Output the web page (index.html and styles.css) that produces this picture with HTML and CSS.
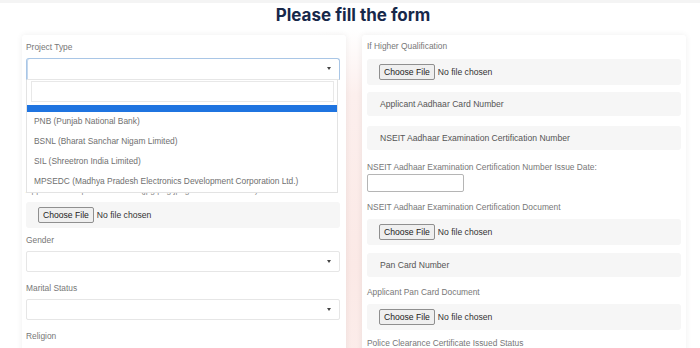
FILE: index.html
```html
<!DOCTYPE html>
<html lang="en">
<head>
  <meta charset="UTF-8" />
  <meta name="viewport" content="width=device-width, initial-scale=1.0"/>
  <title>Application Form</title>
  <link rel="stylesheet" href="styles.css">
</head>
<body>
  <h1>Please fill the form</h1>

  <div class="form-grid">
    <!-- left column -->
    <div class="card">
      <div class="field project">
        <label>Project Type</label>
        <div class="select focused"><span class="arrow"></span></div>

        <div class="dropdown">
          <div class="search"></div>
          <div class="highlight"></div>
          <ul>
            <li>PNB (Punjab National Bank)</li>
            <li>BSNL (Bharat Sanchar Nigam Limited)</li>
            <li>SIL (Shreetron India Limited)</li>
            <li>MPSEDC (Madhya Pradesh Electronics Development Corporation Ltd.)</li>
          </ul>
        </div>
      </div>

      <!-- fields hidden under the open dropdown -->
      <div class="field covered"></div>
      <div class="field covered"></div>

      <div class="field file-field">
        <label>Applicant Passport Size Photo (jpg/png/jpeg Format Max 2mb)</label>
        <div class="file-bar"><button>Choose File</button><span>No file chosen</span></div>
      </div>

      <div class="field">
        <label>Gender</label>
        <div class="select"><span class="arrow"></span></div>
      </div>

      <div class="field">
        <label>Marital Status</label>
        <div class="select"><span class="arrow"></span></div>
      </div>

      <div class="field">
        <label>Religion</label>
      </div>
    </div>

    <!-- right column -->
    <div class="card right">
      <label>If Higher Qualification</label>
      <div class="file-bar"><button>Choose File</button><span>No file chosen</span></div>

      <div class="grey-input first">Applicant Aadhaar Card Number</div>
      <div class="grey-input second">NSEIT Aadhaar Examination Certification Number</div>

      <label class="date-label">NSEIT Aadhaar Examination Certification Number Issue Date:</label>
      <div class="date-input"></div>

      <label class="doc-label">NSEIT Aadhaar Examination Certification Document</label>
      <div class="file-bar"><button>Choose File</button><span>No file chosen</span></div>

      <div class="grey-input pan">Pan Card Number</div>

      <label class="doc-label">Applicant Pan Card Document</label>
      <div class="file-bar"><button>Choose File</button><span>No file chosen</span></div>

      <label class="doc-label last">Police Clearance Certificate Issued Status</label>
    </div>
  </div>
</body>
</html>
```

FILE: styles.css
```css
* {
  box-sizing: border-box;
  margin: 0;
  padding: 0;
}

body {
  font-family: 'Liberation Sans', Arial, sans-serif;
  font-size: 8.4px;
  color: #777;
  width: 700px;
  height: 348px;
  overflow: hidden;
  border-top: 3px solid #f4f4f4;
  background:
    radial-gradient(circle at 352px 265px, #fbe9e6 0, #fcefed 170px, #fff 235px);
}

h1 {
  font-family: 'Inter', sans-serif;
  font-size: 17px;
  font-weight: 700;
  color: #17284a;
  text-align: center;
  line-height: 24px;
  margin-left: 6px;
}

.form-grid {
  display: grid;
  grid-template-columns: 324px 324px;
  gap: 16px;
  margin: 8px 0 0 22px;
}

.card {
  background: #fff;
  border-radius: 3px;
  box-shadow: 0 0 6px rgba(0, 0, 0, 0.07);
  padding: 6px 6px 0 4px;
  height: 320px;
}

.card.right {
  padding: 5px 5px 0 5px;
}

label {
  display: block;
  line-height: 12px;
  white-space: nowrap;
}

.field {
  margin-bottom: 10px;
}

.field label {
  margin-bottom: 5px;
}

.select {
  position: relative;
  height: 21px;
  border: 1px solid #e6e6e6;
  border-radius: 2px;
  background: #fff;
}

.select.focused {
  height: 22px;
  border-color: #a9c6e6;
  border-bottom-color: #e6e6e6;
  border-radius: 3px 3px 0 0;
  box-shadow: inset 1px 0 0 #c4d8ee;
}

.arrow {
  position: absolute;
  right: 8px;
  top: 8px;
  border-left: 2.5px solid transparent;
  border-right: 2.5px solid transparent;
  border-top: 3.5px solid #444;
}

.field.project {
  position: relative;
  margin-bottom: 11px;
}

.dropdown {
  position: absolute;
  top: 39px;
  left: 0;
  width: 312px;
  background: #fff;
  border: 1px solid #e3e3e3;
  border-top: none;
  z-index: 2;
}

.search {
  height: 21px;
  margin: 1px 3px 0 4px;
  border: 1px solid #e8e8e8;
}

.highlight {
  height: 7px;
  margin-top: 3px;
  background: #1f74e0;
}

.dropdown ul {
  list-style: none;
}

.dropdown li {
  height: 20px;
  line-height: 18px;
  padding-left: 7px;
  color: #6f6f6f;
  white-space: nowrap;
}

.field.covered {
  height: 36px;
}

.field.covered + .field.covered {
  height: 37px;
}

.field.file-field {
  margin-bottom: 6px;
}

.field.file-field label {
  margin-bottom: 6px;
  color: #888;
}

.file-bar {
  display: flex;
  align-items: center;
  gap: 3px;
  height: 26px;
  padding-left: 12px;
  background: #f6f6f6;
  border-radius: 3px;
  color: #333;
  font-size: 8.6px;
}

.file-bar button {
  font-family: 'Liberation Sans', Arial, sans-serif;
  font-size: 8.6px;
  color: #222;
  height: 16px;
  padding: 0 4px;
  background: #efefef;
  border: 1px solid #8f8f8f;
  border-radius: 2px;
}

.card.right > label:first-child {
  margin-bottom: 7px;
}

.grey-input {
  height: 24px;
  line-height: 24px;
  padding-left: 13px;
  background: #f6f6f6;
  border-radius: 3px;
  color: #555;
  font-size: 8.6px;
}

.grey-input.first {
  margin-top: 7px;
}

.grey-input.second {
  margin-top: 10px;
}

.grey-input.pan {
  margin-top: 8px;
}

.date-label {
  margin-top: 11px;
}

.date-input {
  width: 97px;
  height: 18px;
  margin-top: 1px;
  border: 1px solid #b5b5b5;
  border-radius: 2px;
  background: #fff;
}

.doc-label {
  margin-top: 9px;
  margin-bottom: 6px;
}

.doc-label.last {
  margin-top: 7px;
}
```
